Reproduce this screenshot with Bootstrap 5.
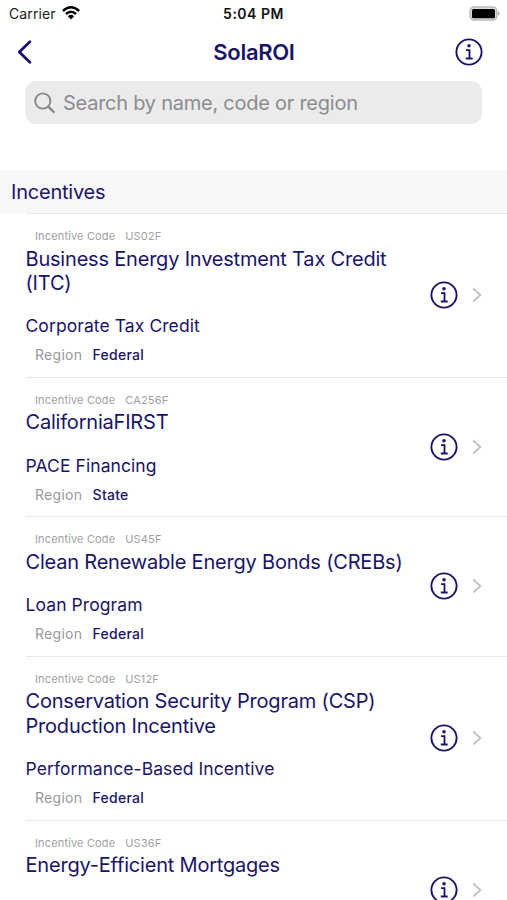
<!DOCTYPE html>
<html lang="en">
<head>
<meta charset="utf-8">
<meta name="viewport" content="width=device-width, initial-scale=1">
<title>SolaROI</title>
<link href="https://cdn.jsdelivr.net/npm/bootstrap@5.3.0/dist/css/bootstrap.min.css" rel="stylesheet">
<style>
:root{--navy:#1a1468}
body{font-family:Inter,"Liberation Sans",sans-serif;color:var(--navy);background:#fff;height:900px;overflow:hidden}
svg{display:block;flex:none}
.status{height:28px;padding:0 7px 0 9px;color:#1c1c1c;font-size:14px;line-height:28px;letter-spacing:.12px}
.status svg{margin-top:-2px}
.wifi{margin-left:6px}
.status .clock{font-weight:600;color:#111;letter-spacing:.5px}
.topbar{height:48px;padding:0 24px 0 17px}
.topbar h1{font-size:22px;font-weight:600;letter-spacing:-.3px;line-height:28px;margin-left:.5px!important}
.search{margin:5px 25px 0;height:43px;border-radius:11px;background:#ebebec;color:#8b8b8f;font-size:20px;padding-left:9px;letter-spacing:-.25px}
.section-head{margin-top:46px;height:43px;background:#f7f7fa;padding-left:11px;font-size:20px;line-height:44px;letter-spacing:-.22px}
.incentives{height:687px;overflow:hidden;padding-left:25.5px}
.incentive{border-top:1px solid #e9e9ec;height:139.4px;padding:15px 25.5px 0 0}
.incentive.tall{height:163.9px}
.code{font-size:11px;line-height:14px;color:#a0a0a2;padding-left:9.5px;letter-spacing:.15px;gap:10px}
.name{font-size:20px;line-height:24.5px;margin-top:3.6px;letter-spacing:-.2px}
.kind{font-size:17.5px;line-height:22px;margin-top:19.6px;letter-spacing:.08px}
.region{font-size:14px;line-height:18px;margin-top:9.2px;padding-left:9.5px;color:#98989b;letter-spacing:.28px;gap:10.3px}
.region b{font-weight:450;color:var(--navy);letter-spacing:.25px}
.detail{width:385px}
.actions{margin-top:-15px}
.arrow{margin-left:14px}
</style>
<script src="https://cdn.jsdelivr.net/npm/bootstrap@5.3.0/dist/js/bootstrap.bundle.min.js"></script>
</head>
<body>
<svg width="0" height="0" class="position-absolute">
<symbol id="info" viewBox="0 0 28 28"><circle cx="14" cy="14" r="12.6" fill="none" stroke="#1a1468" stroke-width="1.9"/><circle cx="14" cy="7.8" r="1.75" fill="#1a1468"/><path d="M11 12.1H14.5V20.3M10.8 20.5H17.7" fill="none" stroke="#1a1468" stroke-width="1.8"/></symbol>
<symbol id="next" viewBox="0 0 10 16"><path d="M1.2 1.5L8.3 8L1.2 14.5" fill="none" stroke="#c4c4c7" stroke-width="2"/></symbol>
</svg>
<header>
<div class="status d-flex align-items-center position-relative">
<span>Carrier</span>
<svg class="wifi" width="18" height="14" viewBox="0 0 18 14"><g fill="none" stroke="#000" stroke-width="2.4"><path d="M.9 5Q9-2.4 17.1 5"/><path d="M3.9 8Q9 3.4 14.1 8"/></g><path d="M9 13.4L5.9 10.2Q9 7.5 12.1 10.2Z"/></svg>
<span class="clock position-absolute top-0 start-50 translate-middle-x">5:04 PM</span>
<svg class="ms-auto" width="31" height="15" viewBox="0 0 31 15"><rect x="1.2" y="1" width="26.6" height="13" rx="3.8" fill="#ddd" stroke="#bbb" stroke-width="1.5"/><rect x="3" y="2.9" width="23" height="9.3" rx="1.5"/><path d="M29 5q3 2.4 0 5Z" fill="#aaa"/></svg>
</div>
<nav class="topbar d-flex align-items-center justify-content-between position-relative">
<svg width="16" height="26" viewBox="0 0 16 26"><path d="M12.9 2.8L2.3 13L12.9 23.2" fill="none" stroke="#17106b" stroke-width="2.8" stroke-linecap="round" stroke-linejoin="round"/></svg>
<h1 class="m-0 position-absolute top-50 start-50 translate-middle">SolaROI</h1>
<svg width="28" height="28"><use href="#info"/></svg>
</nav>
<div class="search d-flex align-items-center"><svg class="me-2" width="21" height="22" viewBox="0 0 21 22"><circle cx="8.8" cy="9" r="7.6" fill="none" stroke="#85858a" stroke-width="1.9"/><path d="M14.3 14.6L19.7 20" stroke="#85858a" stroke-width="2.3" stroke-linecap="round"/></svg><span>Search by name, code or region</span></div>
</header>
<main>
<h2 class="section-head mb-0 fw-normal">Incentives</h2>
<div class="incentives">
<article class="incentive tall d-flex justify-content-between"><div class="detail"><div class="code d-flex"><span>Incentive Code</span><span>US02F</span></div><div class="name">Business Energy Investment Tax Credit<br>(ITC)</div><div class="kind">Corporate Tax Credit</div><div class="region d-flex"><span>Region</span><b>Federal</b></div></div><div class="actions d-flex align-items-center"><svg width="28" height="28"><use href="#info"/></svg><svg class="arrow" width="10" height="16"><use href="#next"/></svg></div></article>
<article class="incentive d-flex justify-content-between"><div class="detail"><div class="code d-flex"><span>Incentive Code</span><span>CA256F</span></div><div class="name">CaliforniaFIRST</div><div class="kind">PACE Financing</div><div class="region d-flex"><span>Region</span><b>State</b></div></div><div class="actions d-flex align-items-center"><svg width="28" height="28"><use href="#info"/></svg><svg class="arrow" width="10" height="16"><use href="#next"/></svg></div></article>
<article class="incentive d-flex justify-content-between"><div class="detail"><div class="code d-flex"><span>Incentive Code</span><span>US45F</span></div><div class="name">Clean Renewable Energy Bonds (CREBs)</div><div class="kind">Loan Program</div><div class="region d-flex"><span>Region</span><b>Federal</b></div></div><div class="actions d-flex align-items-center"><svg width="28" height="28"><use href="#info"/></svg><svg class="arrow" width="10" height="16"><use href="#next"/></svg></div></article>
<article class="incentive tall d-flex justify-content-between"><div class="detail"><div class="code d-flex"><span>Incentive Code</span><span>US12F</span></div><div class="name">Conservation Security Program (CSP)<br>Production Incentive</div><div class="kind">Performance-Based Incentive</div><div class="region d-flex"><span>Region</span><b>Federal</b></div></div><div class="actions d-flex align-items-center"><svg width="28" height="28"><use href="#info"/></svg><svg class="arrow" width="10" height="16"><use href="#next"/></svg></div></article>
<article class="incentive d-flex justify-content-between"><div class="detail"><div class="code d-flex"><span>Incentive Code</span><span>US36F</span></div><div class="name">Energy-Efficient Mortgages</div></div><div class="actions d-flex align-items-center"><svg width="28" height="28"><use href="#info"/></svg><svg class="arrow" width="10" height="16"><use href="#next"/></svg></div></article>
</div>
</main>
</body>
</html>
